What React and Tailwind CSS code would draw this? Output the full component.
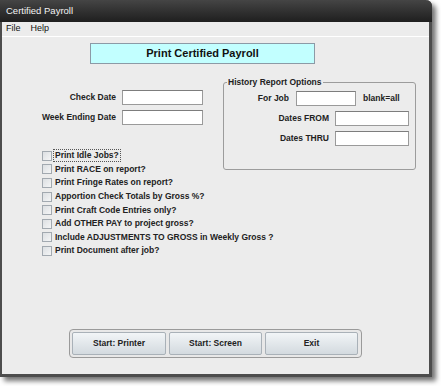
import { useState } from 'react';

const labelFont = { fontFamily: '"Liberation Sans", Arial, sans-serif' };

const options = [
    'Print Idle Jobs?',
    'Print RACE on report?',
    'Print Fringe Rates on report?',
    'Apportion Check Totals by Gross %?',
    'Print Craft Code Entries only?',
    'Add OTHER PAY to project gross?',
    'Include ADJUSTMENTS TO GROSS in Weekly Gross ?',
    'Print Document after job?',
];

const Field = ({ w }) => (
    <input
        type="text"
        className={`${w} h-[15px] bg-white border border-[#9a9a9a] border-t-[#7d7d7d] outline-none px-1 text-[9px]`}
    />
);

const App = () => {
    const [checked, setChecked] = useState(options.map(() => false));

    const toggle = (i) => setChecked(checked.map((c, j) => (j === i ? !c : c)));

    return (
        <div className="w-[441px] h-[386px] bg-white" style={labelFont}>
            <div className="w-[432px] h-[377px] flex flex-col bg-[#ececec] border-l-2 border-r-[3px] border-b-[3px] border-[#4d4d4d] rounded-tr-[6px] shadow-[4px_4px_5px_rgba(0,0,0,0.55)]">
                {/* title bar */}
                <div className="h-[22px] -ml-[2px] -mr-[3px] flex items-center px-[6px] bg-gradient-to-b from-[#454545] to-[#1f1f1f] rounded-tr-[6px] text-[#f2f2f2] text-[9.5px]">
                    Certified Payroll
                </div>

                {/* menu bar */}
                <div className="h-[15px] flex items-center gap-[10px] px-[4px] text-[9px] text-[#111] border-b border-white">
                    <span>File</span>
                    <span>Help</span>
                </div>

                {/* heading */}
                <div className="ml-[88px] mt-[6px] w-[225px] h-[21px] flex items-center justify-center bg-[#c2ffff] border border-[#8c9aa6] text-[11px] font-bold text-[#111]">
                    Print Certified Payroll
                </div>

                <div className="flex mt-[12px]">
                    {/* left column */}
                    <div className="w-[221px] shrink-0 pt-[14px] text-[8.5px] font-bold text-[#222]">
                        <div className="flex flex-col gap-[5px]">
                            <div className="flex items-center gap-[6px]">
                                <span className="w-[114px] text-right">Check Date</span>
                                <Field w="w-[81px]" />
                            </div>
                            <div className="flex items-center gap-[6px]">
                                <span className="w-[114px] text-right">Week Ending Date</span>
                                <Field w="w-[81px]" />
                            </div>
                        </div>

                        <div className="mt-[24px] ml-[40px] flex flex-col">
                            {options.map((opt, i) => (
                                <label key={opt} className="h-[13.6px] flex items-center gap-[2px] whitespace-nowrap cursor-default">
                                    <span
                                        onClick={() => toggle(i)}
                                        className="w-[10px] h-[10px] shrink-0 border border-[#a2a9b0] bg-gradient-to-br from-[#dcdfe2] to-[#f4f5f6] flex items-center justify-center text-[8px] leading-none"
                                    >
                                        {checked[i] ? '✓' : ''}
                                    </span>
                                    <span className={`px-[1px] leading-[11px] ${i === 0 ? 'outline outline-1 outline-dotted outline-[#555]' : ''}`}>
                                        {opt}
                                    </span>
                                </label>
                            ))}
                        </div>
                    </div>

                    {/* history report options */}
                    <fieldset className="w-[193px] h-[94px] border border-[#9c9c9c] rounded-[3px] px-0 pb-0 text-[8.5px] font-bold text-[#222]">
                        <legend className="ml-[3px] px-[1px] leading-[12px]">History Report Options</legend>
                        <div className="pt-[3px] flex flex-col gap-[5px]">
                            <div className="flex items-center gap-[7px]">
                                <span className="w-[65px] text-right">For Job</span>
                                <Field w="w-[60px]" />
                                <span>blank=all</span>
                            </div>
                            <div className="flex items-center gap-[6px]">
                                <span className="w-[105px] text-right">Dates FROM</span>
                                <Field w="w-[74px]" />
                            </div>
                            <div className="flex items-center gap-[6px]">
                                <span className="w-[105px] text-right">Dates THRU</span>
                                <Field w="w-[74px]" />
                            </div>
                        </div>
                    </fieldset>
                </div>

                {/* buttons */}
                <div className="mt-auto mb-[16px] ml-[67px] w-[293px] h-[29px] flex gap-[3px] p-[2px] border border-[#9a9a9a] rounded-[4px] bg-[#e8e8e8]">
                    {['Start: Printer', 'Start: Screen', 'Exit'].map((b, i) => (
                        <button
                            key={b}
                            className={`${i === 0 ? 'w-[94px]' : 'w-[93px]'} h-full border border-[#a9b1b8] rounded-[2px] bg-gradient-to-b from-[#f2f5f7] to-[#d3dadf] text-[8.5px] font-bold text-[#222]`}
                        >
                            {b}
                        </button>
                    ))}
                </div>
            </div>
        </div>
    );
};

export default App;
